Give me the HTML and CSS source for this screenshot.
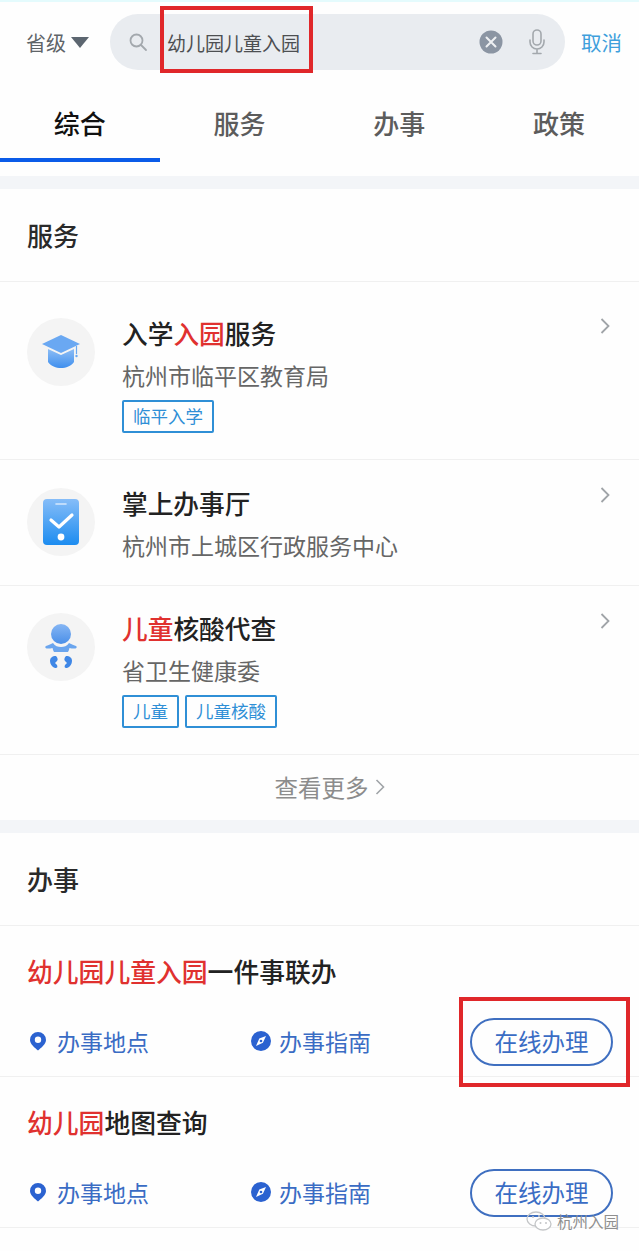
FILE: index.html
```html
<!DOCTYPE html>
<html lang="zh-CN">
<head>
    <meta charset="UTF-8">
    <meta name="viewport" content="width=device-width, initial-scale=1.0">
    <title>搜索</title>
    <link rel="stylesheet" href="styles.css">
</head>
<body>

<div class="searchbar">
    <div class="region">省级<span class="caret"></span></div>
    <div class="search">
        <svg class="search-icon" width="20" height="20" viewBox="0 0 20 20"><circle cx="8.5" cy="8.5" r="6" fill="none" stroke="#a3a8ad" stroke-width="1.8"/><path d="M13 13l5 5" stroke="#a3a8ad" stroke-width="1.8" stroke-linecap="round"/></svg>
        <span class="query">幼儿园儿童入园</span>
        <svg class="clear" width="24" height="24" viewBox="0 0 24 24"><circle cx="12" cy="12" r="11.5" fill="#8b95a3"/><path d="M7.5 7.5l9 9M16.5 7.5l-9 9" stroke="#eef0f3" stroke-width="2" stroke-linecap="round"/></svg>
        <svg class="mic" width="18" height="26" viewBox="0 0 18 26"><rect x="5" y="1" width="8" height="15" rx="4" fill="none" stroke="#a3a8ad" stroke-width="1.6"/><path d="M2 11v2a7 7 0 0 0 14 0v-2M9 20v4M5 24.5h8" fill="none" stroke="#a3a8ad" stroke-width="1.6" stroke-linecap="round"/></svg>
    </div>
    <div class="cancel">取消</div>
</div>
<div class="mark mark-search"></div>

<div class="tabs">
    <div class="tab active">综合</div>
    <div class="tab">服务</div>
    <div class="tab">办事</div>
    <div class="tab">政策</div>
</div>

<div class="band band-first"></div>

<div class="heading">服务</div>

<div class="service service-tall">
    <div class="avatar">
        <svg width="40" height="36" viewBox="0 0 40 36">
            <defs>
                <linearGradient id="grad" x1="0" y1="0" x2="0" y2="1"><stop offset="0" stop-color="#8dbdf5"/><stop offset="1" stop-color="#3f8fee"/></linearGradient>
            </defs>
            <path d="M20 1L39 10 20 19 1 10z" fill="#6aa8f2"/>
            <path d="M7 15l13 6 13-6v13c-3 4-8 6-13 6s-10-2-13-6z" fill="url(#grad)"/>
            <path d="M35.5 12v8" stroke="#6aa8f2" stroke-width="1.2"/>
            <circle cx="35.5" cy="22" r="1.2" fill="#6aa8f2"/>
        </svg>
    </div>
    <div class="service-body">
        <div class="service-title">入学<em>入园</em>服务</div>
        <div class="service-org">杭州市临平区教育局</div>
        <div class="tags"><span class="tag">临平入学</span></div>
    </div>
    <svg class="chevron" width="10" height="16" viewBox="0 0 10 16"><path d="M1.5 1l7 7-7 7" fill="none" stroke="#a0a4a8" stroke-width="1.8"/></svg>
</div>

<div class="service service-short">
    <div class="avatar">
        <svg width="38" height="46" viewBox="0 0 38 46">
            <defs>
                <linearGradient id="grad2" x1="0" y1="0" x2="0" y2="1"><stop offset="0" stop-color="#86bdf8"/><stop offset="1" stop-color="#1c8cf0"/></linearGradient>
            </defs>
            <rect x="1" y="0" width="36" height="46" rx="4" fill="url(#grad2)"/>
            <path d="M14 5h10" stroke="#d5e8fd" stroke-width="1.6" stroke-linecap="round"/>
            <path d="M9 21l8 7 13-12" fill="none" stroke="#fff" stroke-width="3.2" stroke-linecap="round" stroke-linejoin="round"/>
            <circle cx="19" cy="38" r="3.4" fill="#fff"/>
        </svg>
    </div>
    <div class="service-body">
        <div class="service-title">掌上办事厅</div>
        <div class="service-org">杭州市上城区行政服务中心</div>
    </div>
    <svg class="chevron" width="10" height="16" viewBox="0 0 10 16"><path d="M1.5 1l7 7-7 7" fill="none" stroke="#a0a4a8" stroke-width="1.8"/></svg>
</div>

<div class="service service-mid">
    <div class="avatar">
        <svg width="34" height="46" viewBox="0 0 34 46">
            <defs>
                <linearGradient id="grad3" x1="0" y1="0" x2="0" y2="1"><stop offset="0" stop-color="#86b6f4"/><stop offset="1" stop-color="#4a8fe8"/></linearGradient>
            </defs>
            <circle cx="17" cy="10" r="10" fill="url(#grad3)"/>
            <path d="M2 22c3-1 5-2 7-3 2 3 5 4 8 4s6-1 8-4c2 1 4 2 7 3 1 .5 1 2-.5 2.5-2 .3-4 0-6-.5-.5 2-1 3-1.5 4H10c-.5-1-1-2-1.5-4-2 .5-4 .8-6 .5C1 24 1 22.5 2 22z" fill="#6aa5ee"/>
            <path d="M12 32c-4 0-6 2-6 5 0 3 2 6 5 7 2 .5 3-1 2-3l-2-2 2-2c1-1 1-3-1-5z" fill="#3f87e6"/>
            <path d="M22 32c4 0 6 2 6 5 0 3-2 6-5 7-2 .5-3-1-2-3l2-2-2-2c-1-1-1-3 1-5z" fill="#3f87e6"/>
        </svg>
    </div>
    <div class="service-body">
        <div class="service-title"><em>儿童</em>核酸代查</div>
        <div class="service-org">省卫生健康委</div>
        <div class="tags"><span class="tag">儿童</span><span class="tag">儿童核酸</span></div>
    </div>
    <svg class="chevron" width="10" height="16" viewBox="0 0 10 16"><path d="M1.5 1l7 7-7 7" fill="none" stroke="#a0a4a8" stroke-width="1.8"/></svg>
</div>

<div class="more">查看更多<svg class="more-arrow" width="10" height="16" viewBox="0 0 10 16"><path d="M1.5 1l7 7-7 7" fill="none" stroke="#a0a4a8" stroke-width="1.6"/></svg></div>

<div class="band"></div>

<div class="heading">办事</div>

<div class="work">
    <div class="work-title"><em>幼儿园儿童入园</em>一件事联办</div>
    <div class="work-links">
        <div class="work-link link-place">
            <svg width="18" height="20" viewBox="0 0 18 20"><path fill-rule="evenodd" d="M9 1a8 8 0 0 1 8 8C17 13 12 17 9 19.500 6 17 1 13 1 9a8 8 0 0 1 8-8zm0 4.600a3.200 3.200 0 1 0 0 6.400 3.200 3.200 0 0 0 0-6.400z" fill="#2b62d0"/></svg>
            办事地点
        </div>
        <div class="work-link link-guide">
            <svg width="20" height="20" viewBox="0 0 20 20"><path fill-rule="evenodd" d="M10 0a10 10 0 1 1 0 20 10 10 0 0 1 0-20zm5 5L8.300 7.600 5 15l6.900-3.300z" fill="#2b62d0"/><circle cx="10" cy="10" r="1.300" fill="#2b62d0"/></svg>
            办事指南
        </div>
        <div class="apply">在线办理</div>
    </div>
</div>
<div class="mark mark-apply"></div>

<div class="work">
    <div class="work-title"><em>幼儿园</em>地图查询</div>
    <div class="work-links">
        <div class="work-link link-place">
            <svg width="18" height="20" viewBox="0 0 18 20"><path fill-rule="evenodd" d="M9 1a8 8 0 0 1 8 8C17 13 12 17 9 19.500 6 17 1 13 1 9a8 8 0 0 1 8-8zm0 4.600a3.200 3.200 0 1 0 0 6.400 3.200 3.200 0 0 0 0-6.400z" fill="#2b62d0"/></svg>
            办事地点
        </div>
        <div class="work-link link-guide">
            <svg width="20" height="20" viewBox="0 0 20 20"><path fill-rule="evenodd" d="M10 0a10 10 0 1 1 0 20 10 10 0 0 1 0-20zm5 5L8.300 7.600 5 15l6.900-3.300z" fill="#2b62d0"/><circle cx="10" cy="10" r="1.300" fill="#2b62d0"/></svg>
            办事指南
        </div>
        <div class="apply">在线办理</div>
    </div>
</div>

<div class="watermark">
    <svg width="26" height="20" viewBox="0 0 26 20"><ellipse cx="10" cy="8" rx="9" ry="7" fill="none" stroke="#c4c6c8" stroke-width="1.3"/><ellipse cx="17" cy="13" rx="8" ry="6" fill="#fff" stroke="#c4c6c8" stroke-width="1.3"/><circle cx="7" cy="6" r="1" fill="#c4c6c8"/><circle cx="13" cy="5" r="1" fill="#c4c6c8"/><circle cx="14.5" cy="12" r="1" fill="#c4c6c8"/><circle cx="20" cy="12" r="1" fill="#c4c6c8"/></svg>
    <span class="watermark-name">杭州入园</span>
</div>

</body>
</html>
```

FILE: styles.css
```css
* {
    box-sizing: border-box;
}
body {
    position: relative;
    margin: 0;
    height: 1251px;
    overflow: hidden;
    background-color: #fefefe;
    font-family: "Liberation Sans", "Noto Sans CJK SC", sans-serif;
    color: #222;
    border-top: 2px solid #e4fbfd;
}
em {
    font-style: normal;
    color: #e0312f;
}

/* search */
.searchbar {
    display: flex;
    align-items: center;
    height: 56px;
    margin-top: 12px;
    padding-left: 26px;
}
.region {
    display: flex;
    align-items: center;
    width: 84px;
    font-size: 20px;
    color: #5f6468;
}
.caret {
    margin-left: 5px;
    border-left: 9px solid transparent;
    border-right: 9px solid transparent;
    border-top: 11px solid #5c6670;
}
.search {
    display: flex;
    align-items: center;
    width: 455px;
    height: 56px;
    padding-left: 18px;
    border-radius: 28px;
    background-color: #e9ecf0;
}
.query {
    margin-left: 19px;
    width: 312px;
    font-size: 19px;
    color: #4d4f52;
}
.clear {
    margin-right: 25px;
}
.cancel {
    margin-left: 16px;
    font-size: 20.5px;
    color: #3f9fdc;
}

/* red marks over the screenshot */
.mark {
    position: absolute;
    border: 4px solid #e0272a;
}
.mark-search {
    left: 160px;
    top: 4px;
    width: 153px;
    height: 67px;
}
.mark-apply {
    left: 459px;
    top: 995px;
    width: 171px;
    height: 90px;
}

/* tabs */
.tabs {
    display: flex;
    height: 92px;
}
.tab {
    flex: 1;
    padding-top: 35px;
    text-align: center;
    font-size: 26px;
    font-weight: 500;
    line-height: 40px;
    color: #5c5c5c;
}
.tab.active {
    color: #111;
    border-bottom: 4px solid #0a5be8;
}
.band {
    height: 13px;
    background-color: #f3f5f8;
}
.band-first {
    margin-top: 14px;
}

.heading {
    display: flex;
    align-items: center;
    height: 93px;
    padding: 0 0 1px 27px;
    font-size: 26px;
    font-weight: 500;
    color: #2a2a2a;
    border-bottom: 1px solid #f0f0f0;
}

/* service rows */
.service {
    position: relative;
    display: flex;
    padding: 36px 0 0 27px;
    border-bottom: 1px solid #f0f0f0;
}
.service-tall {
    height: 178px;
}
.service-short {
    height: 126px;
    padding-top: 28px;
}
.service-mid {
    height: 169px;
    padding-top: 27px;
}
.avatar {
    display: flex;
    align-items: center;
    justify-content: center;
    flex-shrink: 0;
    width: 68px;
    height: 68px;
    margin-right: 27px;
    border-radius: 50%;
    background-color: #f4f4f4;
}
.service-body {
    margin-top: -2px;
}
.service-title {
    font-size: 25.7px;
    font-weight: 500;
    line-height: 38px;
    color: #222;
}
.service-org {
    margin-top: 6px;
    font-size: 23px;
    line-height: 34px;
    color: #666;
}
.tags {
    display: flex;
    gap: 6px;
    margin-top: 6px;
}
.tag {
    display: block;
    height: 33px;
    padding: 0 9px;
    border: 2px solid #2f8fd6;
    border-radius: 2px;
    font-size: 17.5px;
    line-height: 31px;
    color: #2f8fd6;
}
.chevron {
    position: absolute;
    right: 29px;
    top: 36px;
}
.service-short .chevron,
.service-mid .chevron {
    top: 27px;
}

.more {
    display: flex;
    align-items: center;
    justify-content: center;
    height: 65px;
    padding: 0 0 2px 20px;
    font-size: 23.5px;
    color: #8c8c8c;
}
.more-arrow {
    margin-left: 6px;
}

/* work rows */
.work {
    height: 151px;
    padding: 27px 26px 0 27px;
    border-bottom: 1px solid #f0f0f0;
}
.work-title {
    font-size: 25.8px;
    font-weight: 500;
    line-height: 40px;
    color: #222;
}
.work-links {
    display: flex;
    align-items: center;
    height: 48px;
    margin-top: 25px;
}
.work-link {
    display: flex;
    align-items: center;
    padding-bottom: 2px;
    font-size: 23px;
    color: #3a6cc4;
}
.link-place {
    width: 224px;
    gap: 10px;
    padding-left: 2px;
}
.link-guide {
    width: 219px;
    gap: 8px;
}
.apply {
    width: 143px;
    height: 48px;
    border: 2px solid #3f6fc0;
    border-radius: 24px;
    text-align: center;
    font-size: 23.5px;
    line-height: 46px;
    color: #3a6cc4;
}

.watermark {
    position: absolute;
    left: 526px;
    top: 1208px;
    display: flex;
    align-items: center;
    gap: 5px;
}
.watermark-name {
    font-size: 15.5px;
    color: #8f8f8f;
}
```
